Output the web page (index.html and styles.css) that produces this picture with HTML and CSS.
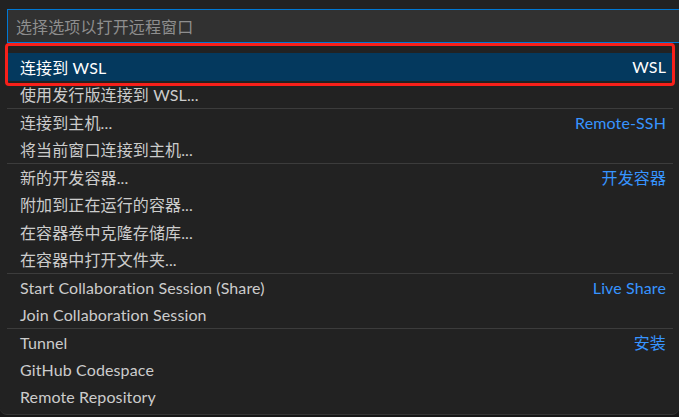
FILE: index.html
```html
<!DOCTYPE html>
<html lang="zh-CN">
<head>
<meta charset="utf-8">
<title>Quick Pick</title>
<link rel="stylesheet" href="styles.css">
</head>
<body>
<div class="widget">
  <div class="input-row">
    <div class="input">选择选项以打开远程窗口</div>
  </div>
  <ul class="list">
    <li class="row active"><span class="label">连接到 WSL</span><span class="detail">WSL</span></li>
    <li class="row"><span class="label">使用发行版连接到 WSL...</span></li>
    <li class="row sep"><span class="label">连接到主机...</span><span class="detail">Remote-SSH</span></li>
    <li class="row"><span class="label">将当前窗口连接到主机...</span></li>
    <li class="row sep"><span class="label">新的开发容器...</span><span class="detail">开发容器</span></li>
    <li class="row"><span class="label">附加到正在运行的容器...</span></li>
    <li class="row"><span class="label">在容器卷中克隆存储库...</span></li>
    <li class="row"><span class="label">在容器中打开文件夹...</span></li>
    <li class="row sep"><span class="label">Start Collaboration Session (Share)</span><span class="detail">Live Share</span></li>
    <li class="row"><span class="label">Join Collaboration Session</span></li>
    <li class="row sep"><span class="label">Tunnel</span><span class="detail">安装</span></li>
    <li class="row"><span class="label">GitHub Codespace</span></li>
    <li class="row"><span class="label">Remote Repository</span></li>
  </ul>
  <div class="annotation"></div>
</div>
</body>
</html>
```

FILE: styles.css
```css
html, body {
  margin: 0;
  padding: 0;
  background: #181818;
  overflow: hidden;
}

body {
  width: 679px;
  height: 417px;
  font-family: "Lato", "Noto Sans CJK SC", sans-serif;
  font-size: 16px;
  letter-spacing: 0.12px;
  color: #cccccc;
}

.widget {
  position: relative;
  height: 415px;
  background: #222222;
  border-bottom: 1px solid #353535;
  border-radius: 0 0 7px 7px;
  padding: 9px 0 0 7px;
  box-sizing: border-box;
}

.input-row {
  height: 34px;
}

.input {
  height: 34px;
  box-sizing: border-box;
  background: #313131;
  border: 1px solid #0078d4;
  border-right: none;
  padding-left: 8px;
  display: flex;
  align-items: center;
  color: #8e8e8e;
  font-family: "Noto Sans CJK SC", sans-serif;
}

.list {
  list-style: none;
  margin: 10px 6px 0 0;
  padding: 0;
}

.row {
  height: 27.5px;
  box-sizing: border-box;
  display: flex;
  align-items: center;
  justify-content: space-between;
  padding: 0 7px 0 13px;
  white-space: nowrap;
}

.row.sep {
  border-top: 1px solid #3c3c3c;
}

.row.active {
  background: #04395e;
  color: #ffffff;
}

.detail {
  color: #3794ff;
}

.row.active .detail {
  color: #ffffff;
}

.annotation {
  position: absolute;
  left: 5px;
  top: 43px;
  width: 670px;
  height: 43px;
  box-sizing: border-box;
  border: 3px solid #f8201a;
  border-radius: 4px;
}
```
